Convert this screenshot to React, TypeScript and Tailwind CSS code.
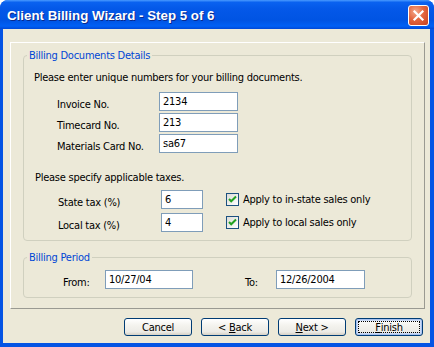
import React from "react";

function XpButton({ children, isDefault }: { children: React.ReactNode; isDefault?: boolean }) {
  return (
    <button
      className={
        "w-[68px] h-[18px] rounded-[3px] border border-[#003c74] bg-[linear-gradient(180deg,#ffffff_0%,#f4f3ee_40%,#ecebe6_80%,#d6d0c5_100%)] text-[11px] leading-[13px] tracking-[-0.25px] text-black flex items-center justify-center p-0 " +
        (isDefault ? "shadow-[inset_0_0_0_1px_#a8c2f0,inset_0_0_0_2px_#cddcf6]" : "")
      }
    >
      {isDefault ? (
        <span className="w-[62px] h-[12px] border border-dotted border-black flex items-center justify-center">
          {children}
        </span>
      ) : (
        children
      )}
    </button>
  );
}

function TextBox({ value, width }: { value: string; width: string }) {
  return (
    <input
      readOnly
      defaultValue={value}
      className={
        width +
        " h-[19px] border border-[#7f9db9] bg-white px-[3px] text-[11px] leading-[13px] tracking-[-0.25px] text-black outline-none"
      }
    />
  );
}

function CheckBox({ label }: { label: string }) {
  return (
    <div className="flex items-center">
      <span className="w-[13px] h-[13px] border border-[#1c5180] bg-[linear-gradient(135deg,#dcdcd7,#ffffff)] flex items-center justify-center">
        <svg width="11" height="11" viewBox="0 0 11 11">
          <path d="M2 5 L4.2 7.3 L9 2.5" fill="none" stroke="#21a121" strokeWidth="2" />
        </svg>
      </span>
      <span className="ml-[4px]">{label}</span>
    </div>
  );
}

function FieldRow({ label, value, labelW, inputW }: { label: string; value: string; labelW: string; inputW: string }) {
  return (
    <div className="flex items-start">
      <span className={labelW + " mt-[6px]"}>{label}</span>
      <TextBox value={value} width={inputW} />
    </div>
  );
}

export default function App() {
  return (
    <div className="w-[434px] h-[347px] bg-white font-['DejaVu_Sans_Condensed','DejaVu_Sans',sans-serif] text-[11px] leading-[13px] tracking-[-0.25px] text-black">
      <div className="w-full h-full flex flex-col rounded-t-[8px] bg-[#0454e4] overflow-hidden">
        {/* title bar */}
        <div className="h-[29px] flex items-start justify-between pl-[7px] pr-[5px] bg-[linear-gradient(180deg,#4a9bff_0%,#0a62f0_8%,#0458e8_30%,#0054e3_70%,#0060f5_90%,#0048d6_100%)]">
          <span className="mt-[8px] text-white font-bold font-['Liberation_Sans',Arial,sans-serif] text-[13.3px] leading-[15px] tracking-normal [text-shadow:1px_1px_0_#0a2a8c]">
            Client Billing Wizard - Step 5 of 6
          </span>
          <div className="mt-[5px] w-[21px] h-[21px] rounded-[3px] border border-white bg-[radial-gradient(circle_at_35%_30%,#f4a98c_0%,#e3663f_45%,#c9401d_100%)] flex items-center justify-center">
            <svg width="13" height="13" viewBox="0 0 13 13">
              <path d="M2.5 2.5 L10.5 10.5 M10.5 2.5 L2.5 10.5" stroke="#ffffff" strokeWidth="2.2" strokeLinecap="square" />
            </svg>
          </div>
        </div>

        {/* client area */}
        <div className="flex-1 ml-[3px] mr-[4px] mb-[4px] bg-[#ece9d8] flex flex-col">
          <div className="mt-[13px] ml-[7px] mr-[5px] h-[267px] border border-t-white border-l-white border-r-[#9a9a92] border-b-[#9a9a92] flex flex-col">
            <fieldset className="mt-[6px] mx-[12px] border border-[#d0d0bf] rounded-[4px] pb-[8px]">
              <legend className="ml-[3px] px-[2px] text-[#0046d5] leading-[13px]">Billing Documents Details</legend>
              <div className="pl-[10px] pt-[9px]">Please enter unique numbers for your billing documents.</div>
              <div className="mt-[8px] ml-[33px] flex flex-col gap-[2px]">
                <FieldRow label="Invoice No." value="2134" labelW="w-[102px]" inputW="w-[79px]" />
                <FieldRow label="Timecard No." value="213" labelW="w-[102px]" inputW="w-[79px]" />
                <FieldRow label="Materials Card No." value="sa67" labelW="w-[102px]" inputW="w-[79px]" />
              </div>
              <div className="pl-[11px] mt-[18px]">Please specify applicable taxes.</div>
              <div className="mt-[6px] ml-[34px] flex flex-col gap-[4px]">
                <div className="flex items-start">
                  <FieldRow label="State tax (%)" value="6" labelW="w-[103px]" inputW="w-[42px]" />
                  <div className="ml-[23px] mt-[3px]">
                    <CheckBox label="Apply to in-state sales only" />
                  </div>
                </div>
                <div className="flex items-start">
                  <FieldRow label="Local tax (%)" value="4" labelW="w-[103px]" inputW="w-[42px]" />
                  <div className="ml-[23px] mt-[3px]">
                    <CheckBox label="Apply to local sales only" />
                  </div>
                </div>
              </div>
            </fieldset>

            <fieldset className="mt-[10px] mx-[12px] border border-[#d0d0bf] rounded-[4px] pb-[8px]">
              <legend className="ml-[3px] px-[2px] text-[#0046d5] leading-[13px]">Billing Period</legend>
              <div className="pt-[6px] pl-[39px] flex items-start">
                <span className="w-[42px] mt-[6px]">From:</span>
                <TextBox value="10/27/04" width="w-[88px]" />
                <span className="ml-[52px] w-[31px] mt-[6px]">To:</span>
                <TextBox value="12/26/2004" width="w-[89px]" />
              </div>
            </fieldset>
          </div>

          <div className="mt-[9px] pr-[7px] flex justify-end gap-[9px]">
            <XpButton>Cancel</XpButton>
            <XpButton>
              &lt;&nbsp;<span className="underline">B</span>ack
            </XpButton>
            <XpButton>
              <span className="underline">N</span>ext &gt;
            </XpButton>
            <XpButton isDefault>
              <span className="underline">F</span>inish
            </XpButton>
          </div>
        </div>
      </div>
    </div>
  );
}
